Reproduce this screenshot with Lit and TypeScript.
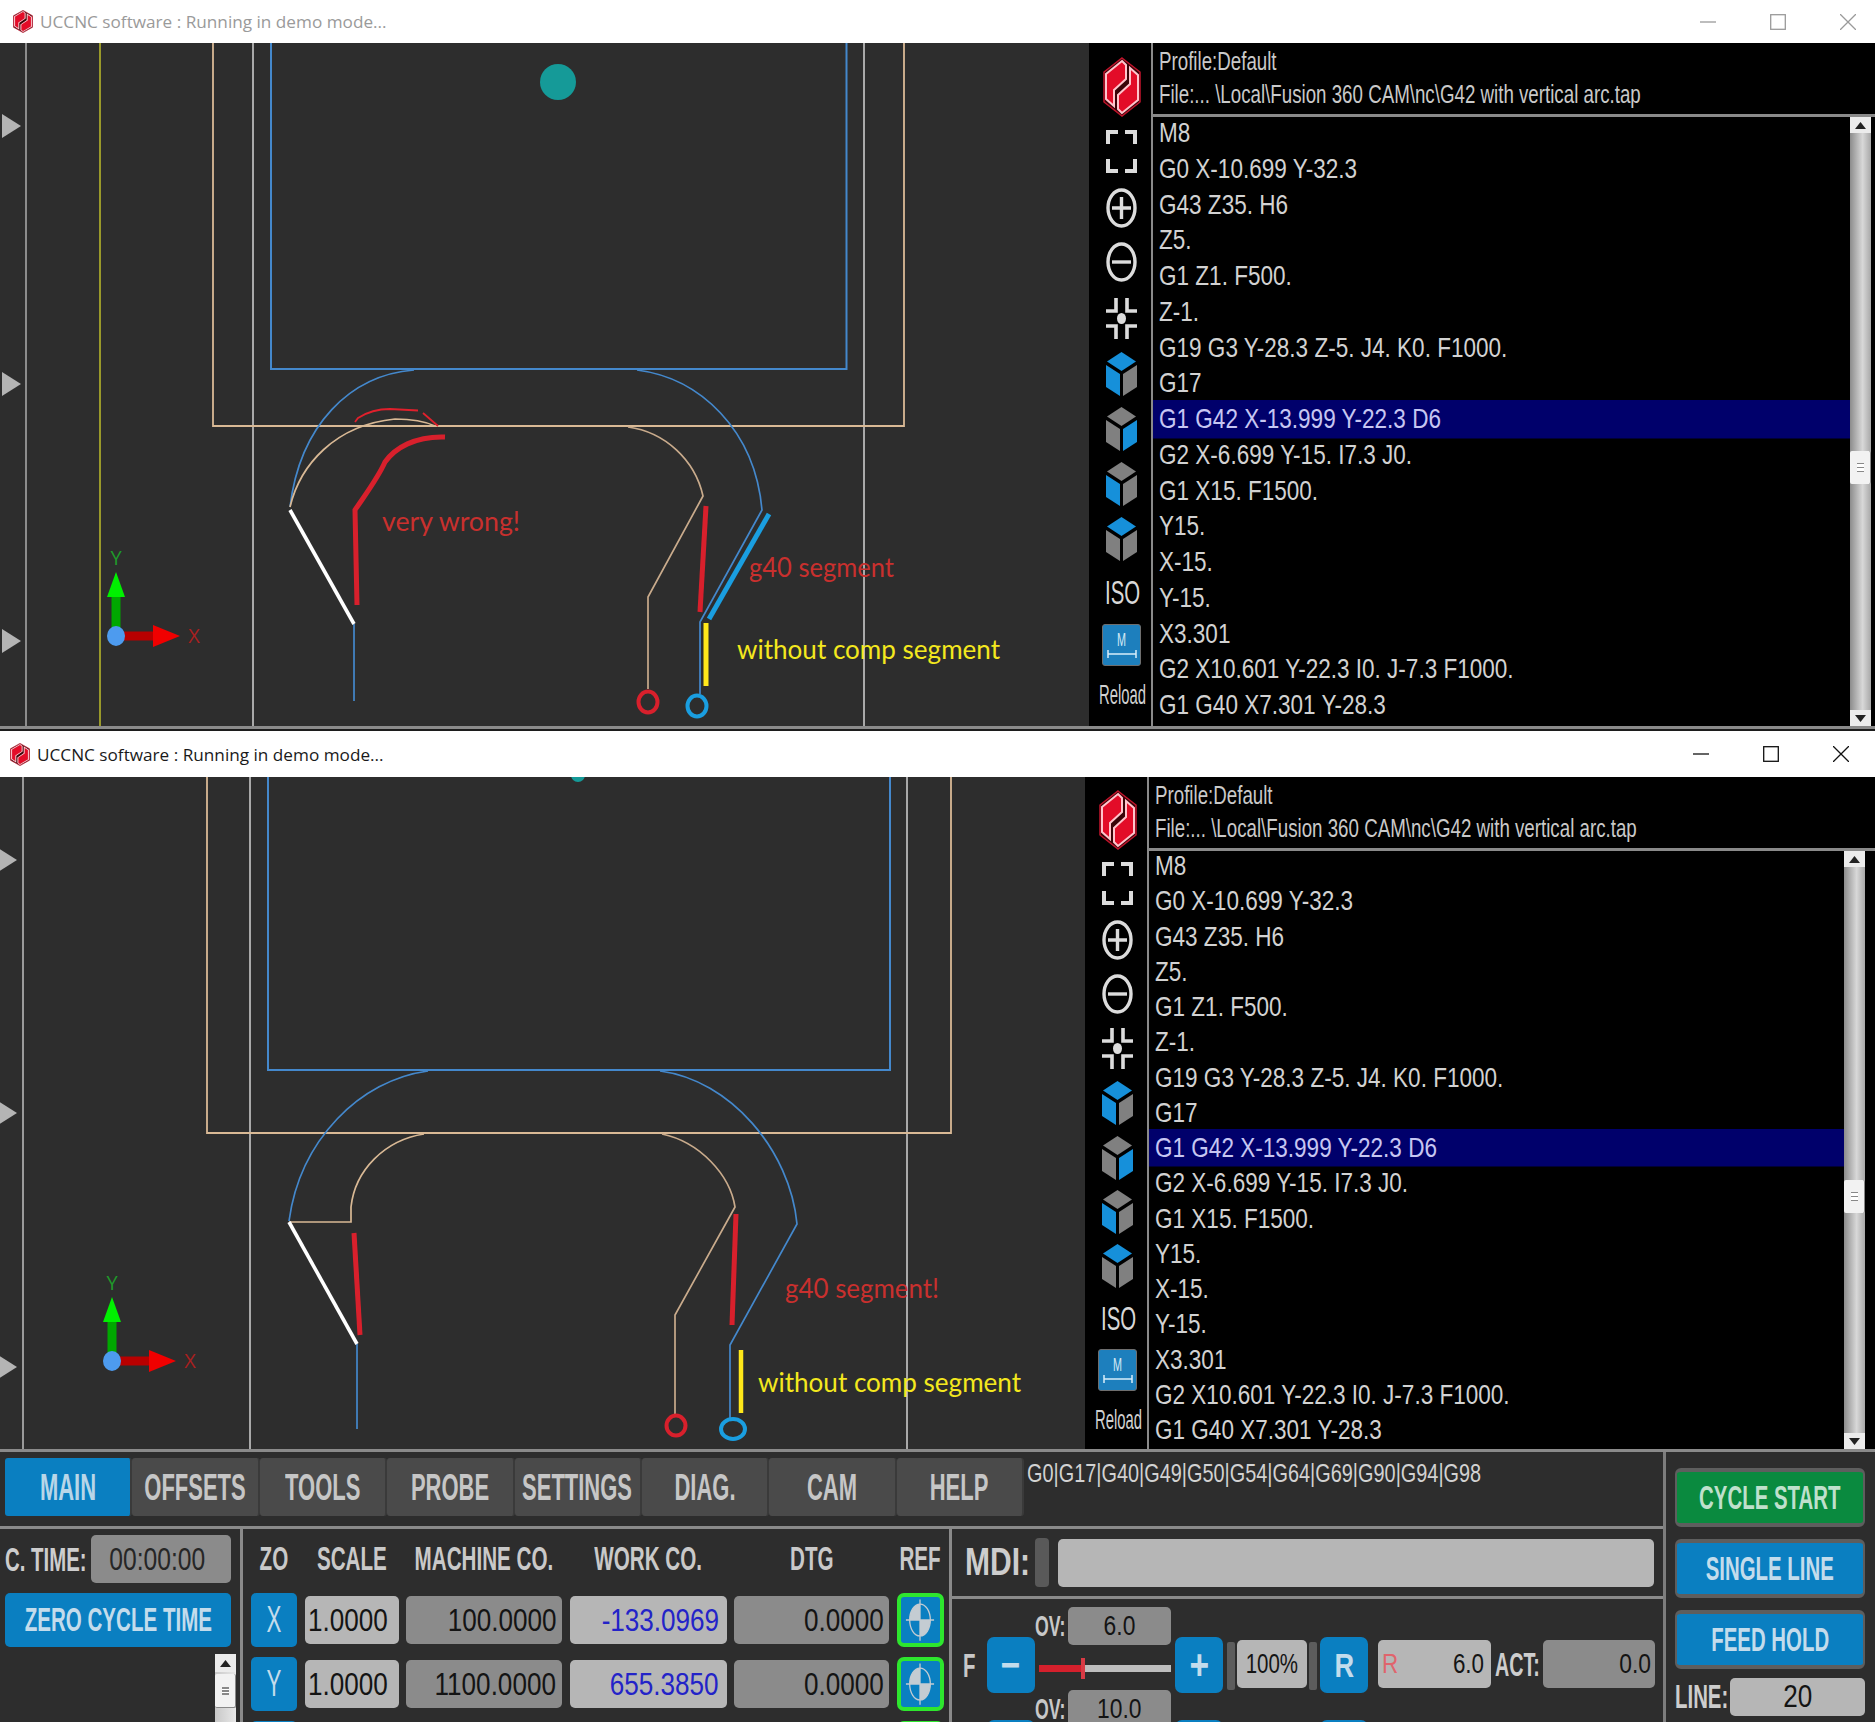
import { LitElement, html, css, svg } from "lit";
import { customElement, property } from "lit/decorators.js";

const CODE = [
  "M8", "G0 X-10.699 Y-32.3", "G43 Z35. H6", "Z5.", "G1 Z1. F500.", "Z-1.",
  "G19 G3 Y-28.3 Z-5. J4. K0. F1000.", "G17", "G1 G42 X-13.999 Y-22.3 D6",
  "G2 X-6.699 Y-15. I7.3 J0.", "G1 X15. F1500.", "Y15.", "X-15.", "Y-15.", "X3.301",
  "G2 X10.601 Y-22.3 I0. J-7.3 F1000.", "G1 G40 X7.301 Y-28.3",
];

const logo = (cls: string) => html`<svg class=${cls} viewBox="0 0 38 60" preserveAspectRatio="none">
  <polygon points="19,1 37,15 37,45 19,59 1,45 1,15" fill="#3a0408" stroke="#c2142c" stroke-width="1.5"/>
  <polygon points="19,4 23,8 23,22 11,33 11,49 3,42 3,17" fill="#e30c28" stroke="#ffc4cc" stroke-width="2"/>
  <polygon points="19,56 15,52 15,38 27,27 27,11 35,18 35,43" fill="#e30c28" stroke="#ffc4cc" stroke-width="2"/>
</svg>`;

const cube = (top: string, left: string, right: string) => html`<svg class="ic" viewBox="0 0 31 44">
  <polygon points="15.5,0 30,9.5 15.5,19 1,9.5" fill=${top}/>
  <polygon points="0,13 14,22 14,44 0,35" fill=${left}/>
  <polygon points="31,13 17,22 17,44 31,35" fill=${right}/>
</svg>`;

const BL = "#1690da";
const GR = "#808080";

const fullscreen = html`<svg class="ic" viewBox="0 0 31 43" fill="none" stroke="#dcdcdc" stroke-width="4">
  <path d="M2 14V2H12M19 2H29V14M2 29V41H12M19 41H29V29"/></svg>`;
const zoomIn = html`<svg class="ic" viewBox="0 0 31 40" fill="none" stroke="#dcdcdc" stroke-width="3.4">
  <ellipse cx="15.5" cy="20" rx="13.5" ry="18"/><path d="M15.5 9V31M6 20H25"/></svg>`;
const zoomOut = html`<svg class="ic" viewBox="0 0 31 40" fill="none" stroke="#dcdcdc" stroke-width="3.4">
  <ellipse cx="15.5" cy="20" rx="13.5" ry="18"/><path d="M6 20H25"/></svg>`;
const centre = html`<svg class="ic" viewBox="0 0 31 43" fill="none" stroke="#dcdcdc" stroke-width="3.6">
  <path d="M0 14H10V1M31 14H21V1M0 29H10V42M31 29H21V42"/>
  <ellipse cx="15.5" cy="21.5" rx="4.5" ry="5.5" fill="#dcdcdc" stroke="none"/></svg>`;

const refIcon = html`<svg class="ref-ic" viewBox="0 0 32 46" fill="none">
  <path d="M16 23V6A11 17 0 0 0 5 23Z" fill="#c4ccd2"/>
  <path d="M16 23V40A11 17 0 0 0 27 23Z" fill="#c4ccd2"/>
  <ellipse cx="16" cy="23" rx="11" ry="17" stroke="#c4ccd2" stroke-width="1.4"/>
  <path d="M16 1V45M1 23H31" stroke="#c4ccd2" stroke-width="1.4"/>
</svg>`;

const canvasBack = (tri: number[], triX: number) => svg`
  ${tri.map((y) => svg`<polygon points="${triX},${y - 12} ${triX + 19},${y} ${triX},${y + 12}" fill="#b4b4b4"/>`)}
`;

const axes = (x: number, y: number) => svg`
  <text x=${x} y=${y - 71} class="ax" text-anchor="middle" fill="#1f9a2a">Y</text>
  <rect x=${x - 4.5} y=${y - 39} width="9" height="34" fill="#00a800"/>
  <polygon points="${x},${y - 64} ${x + 9},${y - 39} ${x - 9},${y - 39}" fill="#00f000"/>
  <rect x=${x + 6} y=${y - 4.5} width="32" height="9" fill="#b80000"/>
  <polygon points="${x + 64},${y} ${x + 37},${y - 11} ${x + 37},${y + 11}" fill="#f00000"/>
  <ellipse cx=${x} cy=${y} rx="9" ry="10" fill="#4d9bef"/>
  <text x=${x + 78} y=${y + 7} class="ax" text-anchor="middle" fill="#a82020">X</text>
`;

const canvasOne = html`<svg class="cv" viewBox="0 43 1089 683" width="1089" height="683">
  <g fill="none">
    <path d="M26 43V726" stroke="#8c8c8c" stroke-width="2"/>
    <path d="M100 43V726" stroke="#b5b52a" stroke-width="1.6"/>
    <path d="M253 43V726M864 43V726" stroke="#c8c8c8" stroke-width="1.6"/>
    <path d="M213 43V426H904V43" stroke="#d9b995" stroke-width="1.8"/>
    <path d="M271 43V369H846.5V43" stroke="#4488cc" stroke-width="2"/>
    <path d="M414 370C350 375 300 425 290 507" stroke="#4488cc" stroke-width="1.7"/>
    <path d="M637 370C700 378 755 430 762 510L700 622V694" stroke="#4488cc" stroke-width="1.7"/>
    <path d="M354 624V701" stroke="#4488cc" stroke-width="1.7"/>
    <path d="M290 507C300 465 335 425 395 419Q420 419 435 426" stroke="#d9b995" stroke-width="1.7"/>
    <path d="M628 427C665 432 695 460 703 496L648 597V689" stroke="#c9ab8c" stroke-width="1.7"/>
    <path d="M290 510L354 624" stroke="#fff" stroke-width="3.6"/>
    <path d="M355 422L358 418Q372 409 390 409L418 410.5M423 413L438 426" stroke="#e0202c" stroke-width="1.8"/>
    <path d="M445 437C415 436 395 448 385 462C378 478 365 495 355 510L357 605" stroke="#d8202c" stroke-width="5"/>
    <path d="M706 506L700 612" stroke="#d8202c" stroke-width="5"/>
    <path d="M769 514L709 619" stroke="#1a9ee0" stroke-width="5"/>
    <path d="M706 623V686" stroke="#ffe81a" stroke-width="5"/>
    <ellipse cx="648" cy="702" rx="9.5" ry="10.5" stroke="#d8202c" stroke-width="4"/>
    <ellipse cx="697" cy="706" rx="9.5" ry="10.5" stroke="#1a9ee0" stroke-width="4"/>
  </g>
  <ellipse cx="558" cy="82" rx="18" ry="18" fill="#159a98"/>
  ${canvasBack([126, 384, 641], 2)}
  ${axes(116, 636)}
  <text class="note" x="382" y="531" fill="#c9302e" textLength="138" lengthAdjust="spacingAndGlyphs">very wrong!</text>
  <text class="note" x="749" y="577" fill="#c9302e" textLength="145" lengthAdjust="spacingAndGlyphs">g40 segment</text>
  <text class="note" x="737" y="659" fill="#f4e81e" textLength="263" lengthAdjust="spacingAndGlyphs">without comp segment</text>
</svg>`;

const canvasTwo = html`<svg class="cv" viewBox="0 777 1085 672" width="1085" height="672">
  <g fill="none">
    <path d="M23 777V1449" stroke="#9a9a9a" stroke-width="2"/>
    <path d="M250 777V1449M907 777V1449" stroke="#c8c8c8" stroke-width="1.6"/>
    <path d="M207 777V1133H951V777" stroke="#d9b995" stroke-width="1.8"/>
    <path d="M268 777V1070H890V777" stroke="#4488cc" stroke-width="2"/>
    <path d="M428 1071C360 1080 300 1140 289 1221" stroke="#4488cc" stroke-width="1.7"/>
    <path d="M660 1071C730 1080 790 1150 797 1224L730 1345V1419" stroke="#4488cc" stroke-width="1.7"/>
    <path d="M357 1344V1429" stroke="#4488cc" stroke-width="1.7"/>
    <path d="M289 1222H351V1207C355 1170 385 1140 424 1134" stroke="#d9b995" stroke-width="1.7"/>
    <path d="M662 1134C700 1142 730 1175 735 1207L675 1315V1414" stroke="#c9ab8c" stroke-width="1.7"/>
    <path d="M289 1222L357 1344" stroke="#fff" stroke-width="3.6"/>
    <path d="M354 1233L360 1335" stroke="#d8202c" stroke-width="5"/>
    <path d="M736 1214L732 1325" stroke="#d8202c" stroke-width="5"/>
    <path d="M741 1350V1413" stroke="#ffe81a" stroke-width="4.5"/>
    <ellipse cx="676" cy="1425.6" rx="9.5" ry="10" stroke="#d8202c" stroke-width="4"/>
    <ellipse cx="733" cy="1429" rx="12" ry="10" stroke="#1a9ee0" stroke-width="4"/>
  </g>
  <circle cx="578" cy="775" r="7" fill="#159a98"/>
  ${canvasBack([860, 1113, 1367], -2)}
  ${axes(112, 1361)}
  <text class="note" x="785" y="1298" fill="#c9302e" textLength="154" lengthAdjust="spacingAndGlyphs">g40 segment!</text>
  <text class="note" x="758" y="1392" fill="#f4e81e" textLength="263" lengthAdjust="spacingAndGlyphs">without comp segment</text>
</svg>`;

@customElement("code-panel")
class CodePanel extends LitElement {
  static styles = css`
    :host { display: flex; flex: 1; min-width: 0; height: 100%; font-family: "Liberation Sans", Arial, sans-serif; }
    .t { display: inline-block; white-space: nowrap; transform-origin: left center; }
    .tools { width: 62px; flex: none; box-sizing: border-box; padding-left: 3px; background: #000; display: grid; justify-items: center; align-items: end; align-content: start; }
    .tools.w1 { grid-template-rows: 74px 56px 55px 54px 58px 56px 55px 55px 55px 48px 57px 42px; }
    .tools.w2 { grid-template-rows: 72.5px 55.5px 55px 54px 55.5px 55.5px 55px 54px 54px 47px 56px 42px; }
    .logo { width: 38px; height: 60px; display: block; }
    .ic { width: 31px; display: block; }
    .iso { font-size: 34px; line-height: 34px; color: #d8d8d8; width: 36px; transform: scaleX(.6); transform-origin: left center; margin-left: 3px; }
    .reload { font-size: 28px; line-height: 26px; color: #d0d0d0; width: 47px; transform: scaleX(.53); transform-origin: left center; margin-left: 1px; }
    .mbtn { width: 39px; height: 42px; box-sizing: border-box; background: #1d7fbd; border: 1px solid #6e6e6e; border-radius: 3px; display: flex; flex-direction: column; align-items: center; justify-content: center; }
    .mbtn svg { width: 30px; height: 10px; display: block; }
    .mbtn b { font-weight: 400; font-size: 18px; line-height: 17px; color: #d4e8f4; transform: scaleX(.6); }
    .main { flex: 1; min-width: 0; display: flex; flex-direction: column; background: #000; border-left: 2px solid #8a8a8a; }
    .head { height: 71px; flex: none; border-bottom: 3px solid #8a8a8a; box-sizing: content-box; color: #c9c9c9; font-size: 26px; position: relative; z-index: 1; background: #000; padding-left: 6px; }
    .head div { height: 33px; line-height: 33px; }
    .head div:first-child { padding-top: 2px; }
    .head .t { transform: scaleX(.72); }
    .list { flex: 1; display: flex; min-height: 0; }
    .rows { flex: 1; min-width: 0; overflow: hidden; }
    .w1 .rows { margin-top: -2px; }
    .w2 .rows { margin-top: -3px; }
    .row { color: #d2d2d2; font-size: 28px; padding-left: 6px; white-space: nowrap; }
    .w1 .row { height: 35.75px; line-height: 36px; }
    .w2 .row { height: 35.25px; line-height: 35px; }
    .row.hl { background: #00006b; color: #c6c6f2; box-shadow: 0 -1px 0 #00006b, 0 1.5px 0 #00006b; }
    .row .t { transform: scaleX(.805); }
    .bar { width: 21px; flex: none; display: flex; flex-direction: column; background: linear-gradient(90deg, #8c8c8c, #d8d8d8 60%, #a8a8a8); }
    .w1 .bar { margin-right: 4px; }
    .w2 .bar { margin-right: 10px; }
    .arrow { height: 16px; flex: none; background: #ececec; display: flex; align-items: center; justify-content: center; }
    .arrow svg { width: 11px; height: 7px; display: block; }
    .track { flex: 1; }
    .thumb { height: 33px; background: #f2f2f2; border-radius: 2px; display: flex; align-items: center; justify-content: center; border-right: 1px solid #888; box-sizing: border-box; }
    .w1 .thumb { margin-top: 318px; }
    .w2 .thumb { margin-top: 313px; }
    .thumb i { display: block; width: 7px; height: 7px; border-top: 1px solid #888; border-bottom: 1px solid #888; background: linear-gradient(#fff 40%, #888 40%, #888 60%, #fff 60%); }
  `;
  @property() win = "w1";
  render() {
    return html`
      <div class="tools ${this.win}">
        ${logo("logo")}
        ${fullscreen}${zoomIn}${zoomOut}${centre}
        ${cube(BL, BL, GR)}${cube(GR, GR, BL)}${cube(GR, BL, GR)}${cube(BL, GR, GR)}
        <span class="t iso">ISO</span>
        <div class="mbtn"><b>M</b><svg viewBox="0 0 30 10" fill="none" stroke="#d8eefa" stroke-width="1.5"><path d="M1 1V9M29 1V9M1 5H29"/></svg></div>
        <span class="t reload">Reload</span>
      </div>
      <div class="main ${this.win}">
        <div class="head">
          <div><span class="t">Profile:Default</span></div>
          <div><span class="t">File:... \\Local\\Fusion 360 CAM\\nc\\G42 with vertical arc.tap</span></div>
        </div>
        <div class="list">
          <div class="rows">
            ${CODE.map((c, i) => html`<div class="row ${i === 8 ? "hl" : ""}"><span class="t">${c}</span></div>`)}
          </div>
          <div class="bar">
            <div class="arrow"><svg viewBox="0 0 11 7"><polygon points="5.5,0 11,7 0,7" fill="#222"/></svg></div>
            <div class="track"><div class="thumb"><i></i></div></div>
            <div class="arrow"><svg viewBox="0 0 11 7"><polygon points="0,0 11,0 5.5,7" fill="#222"/></svg></div>
          </div>
        </div>
      </div>
    `;
  }
}

@customElement("title-bar")
class TitleBar extends LitElement {
  static styles = css`
    :host { display: flex; align-items: center; background: #fff; font-family: "Open Sans", sans-serif; font-size: 17px; }
    :host(.w1) { height: 43px; color: #9a9a9a; padding-left: 13px; }
    :host(.w2) { height: 46px; color: #1a1a1a; padding-left: 10px; }
    .lg { width: 20px; height: 23px; display: block; flex: none; }
    .name { margin-left: 7px; white-space: nowrap; transform: scaleX(1.01); transform-origin: left center; }
    :host(.w2) .name { margin-left: 7px; }
    .ctrls { margin-left: auto; display: flex; }
    .ctrls svg { width: 16px; height: 16px; display: block; }
    :host(.w1) .ctrls { gap: 54px; padding-right: 19px; stroke: #9a9a9a; }
    :host(.w2) .ctrls { gap: 54px; padding-right: 26px; stroke: #111; }
  `;
  render() {
    return html`
      ${logo("lg")}
      <span class="name">UCCNC software : Running in demo mode...</span>
      <div class="ctrls">
        <svg viewBox="0 0 16 16" fill="none" stroke-width="1.3"><path d="M0 8H16"/></svg>
        <svg viewBox="0 0 16 16" fill="none" stroke-width="1.3"><rect x=".7" y=".7" width="14.6" height="14.6"/></svg>
        <svg viewBox="0 0 16 16" fill="none" stroke-width="1.3"><path d="M0 0L16 16M16 0L0 16"/></svg>
      </div>
    `;
  }
}

const TABS = ["MAIN", "OFFSETS", "TOOLS", "PROBE", "SETTINGS", "DIAG.", "CAM", "HELP"];

@customElement("control-panel")
class ControlPanel extends LitElement {
  static styles = css`
    :host { display: flex; height: 270px; background: #2d2d2d; font-family: "Liberation Sans", Arial, sans-serif; overflow: hidden; color: #cfcfcf; }
    .t { display: inline-block; white-space: nowrap; }
    .left { width: 1663px; flex: none; display: flex; flex-direction: column; }
    .right { flex: 1; border-left: 3px solid #7d7d7d; padding: 16px 0 0 9px; display: flex; flex-direction: column; gap: 12px; }
    .top { flex: none; box-sizing: border-box; display: flex; padding: 6px 0 0 5px; border-bottom: 3px solid #8a8a8a; height: 77px; }
    .tabs { display: flex; height: 58px; }
    .tab { width: 127.4px; height: 58px; background: #4a4a4a; border-right: 2px solid #3a3a3a; box-sizing: border-box; display: flex; align-items: center; justify-content: center; font-size: 36px; font-weight: 700; color: #c6c6c6; border-radius: 3px; padding-top: 2px; }
    .tab.on { background: #0a7fc1; color: #b8d6e8; }
    .tab .t { transform: scaleX(.61); }
    .modal { font-size: 26px; margin: 1px 0 0 3px; color: #d2d2d2; line-height: 28px; }
    .modal .t { transform: scaleX(.765); transform-origin: left center; }
    .lower { flex: 1; display: flex; min-height: 0; }
    .cl { border-right: 3px solid #8a8a8a; padding: 6px 0 0 5px; box-sizing: content-box; display: flex; flex-direction: column; width: 235px; flex: none; }
    .ctime { display: flex; height: 48px; align-items: center; }
    .lab { font-size: 34px; font-weight: 700; color: #cdcdcd; }
    .ctime .lab { width: 86px; }
    .ctime .lab .t { transform: scaleX(.6); transform-origin: left center; }
    .box { background: #8b8b8b; border-radius: 5px; display: flex; align-items: center; font-size: 32px; color: #141414; height: 48px; box-sizing: border-box; overflow: hidden; }
    .box.lt { background: #b6b6b6; }
    .box.c { justify-content: center; }
    .box.l { justify-content: flex-start; padding-left: 3px; }
    .box.l .t { transform-origin: left center; }
    .box.r { justify-content: flex-end; padding-right: 6px; }
    .box .t { transform: scaleX(.815); }
    .box.r .t { transform-origin: right center; }
    .work.box.r { padding-right: 8px; color: #2323c8; }
    .timebox { width: 140px; color: #262626; padding-right: 7px; }
    .timebox.box .t { transform: scaleX(.77); }
    .btn { background: #0a7fc1; border-radius: 5px; display: flex; align-items: center; justify-content: center; color: #c3dcec; overflow: hidden; }
    .zero { width: 226px; height: 54px; margin-top: 10px; font-size: 33px; font-weight: 700; }
    .zero .t { transform: scaleX(.623); }
    .sb { width: 21px; margin: 7px 0 0 210px; flex: 1; background: linear-gradient(90deg, #c8c8c8, #e8e8e8); display: flex; flex-direction: column; }
    .sb .a { height: 18px; background: #ececec; display: flex; align-items: center; justify-content: center; }
    .sb .a svg { width: 11px; height: 7px; display: block; }
    .sb .th { height: 33px; margin-top: 2px; background: #f2f2f2; border-right: 1px solid #888; border-bottom: 1px solid #888; border-radius: 2px; display: flex; align-items: center; justify-content: center; }
    .sb .th i { display: block; width: 7px; height: 8px; background: linear-gradient(#888 20%, #fff 20%, #fff 40%, #888 40%, #888 60%, #fff 60%, #fff 80%, #888 80%); }
    .cm { width: 709px; flex: none; box-sizing: border-box; border-right: 3px solid #8a8a8a; padding-left: 8px; display: grid; grid-template-columns: 46px 94px 156px 157px 155px 47px; column-gap: 7.6px; grid-template-rows: 54px 54px 54px 54px; row-gap: 10px; align-items: center; justify-items: stretch; }
    .hd { height: 54px; padding-top: 6px; box-sizing: border-box; display: flex; align-items: center; justify-content: center; font-size: 33px; font-weight: 700; color: #c9c9c9; }
    .hd .t { transform: scaleX(.625); }
    .axis { height: 54px; font-size: 36px; }
    .axis .t { transform: scaleX(.62); }
    .ref { height: 54px; box-sizing: border-box; border: 4px solid #2ee62e; background: #0a7fc1; border-radius: 7px; display: flex; align-items: center; justify-content: center; }
    .ref-ic { height: 44px; width: 30px; display: block; }
    .cr { flex: 1; min-width: 0; display: flex; flex-direction: column; }
    .mdi { height: 67px; flex: none; display: flex; align-items: center; padding-left: 13px; border-bottom: 3px solid #8a8a8a; box-sizing: content-box; }
    .mdi .lab { width: 64px; font-size: 38px; }
    .mdi .lab .t { transform: scaleX(.79); transform-origin: left center; }
    .gbar { width: 14px; height: 49px; background: #595959; border-radius: 4px; margin-left: 6px; flex: none; }
    .mdiin { width: 596px; background: #b2b2b2; margin-left: 9px; height: 48px; }
    .frow { height: 83px; flex: none; display: flex; align-items: flex-start; padding-left: 11px; }
    .fl { width: 23.5px; height: 56px; margin-top: 38px; display: flex; align-items: center; font-size: 34px; font-weight: 700; color: #c8c8c8; }
    .fl .t { transform: scaleX(.6); transform-origin: left center; }
    .fb { width: 48px; height: 56px; margin-top: 38px; flex: none; font-size: 42px; font-weight: 700; border-radius: 7px; }
    .fb.plus { margin-left: 4.5px; }
    .fb .t { transform: scaleX(.8); }
    .ovc { width: 136px; flex: none; margin-top: 8px; display: flex; flex-direction: column; }
    .ovr { display: flex; align-items: center; height: 38px; }
    .ovl { width: 33px; font-size: 30px; font-weight: 700; color: #c8c8c8; }
    .ovl .t { transform: scaleX(.59); transform-origin: left center; }
    .ovb { width: 103px; height: 38px; font-size: 28px; }
    .slide { height: 21px; margin: 13px 0 0 4px; position: relative; display: flex; align-items: center; }
    .slide .fill { width: 44px; height: 7px; background: #d4202c; flex: none; }
    .slide .rest { flex: 1; height: 7px; background: #bdbdbd; }
    .slide .thumb { position: absolute; left: 42px; top: 0; width: 4px; height: 21px; background: #d83a44; }
    .sm { width: 8px; height: 48px; margin-top: 43px; background: #5c5c5c; flex: none; border-radius: 2px; }
    .sm.g { margin-left: 4px; }
    .sm.h { margin-left: 2px; }
    .mb { margin-top: 41px; font-size: 28px; flex: none; }
    .pct { width: 70px; margin-left: 2px; }
    .pct.box .t { transform: scaleX(.73); }
    .fb.rb { margin-left: 3px; font-size: 34px; }
    .rv { width: 113px; margin-left: 9.5px; justify-content: space-between; padding: 0 3px 0 4px; }
    .rv .rr { color: #e0646c; }
    .rv .rr, .rv .t { transform: scaleX(.8); }
    .rr { transform-origin: left center; display: inline-block; }
    .act { width: 47px; margin: 41px 0 0 4px; height: 48px; display: flex; align-items: center; font-size: 34px; font-weight: 700; color: #cdcdcd; flex: none; }
    .act .t { transform: scaleX(.58); transform-origin: left center; }
    .actb { width: 112px; margin-left: 1px; }
    .actb.box.r { padding-right: 4px; }
    .big { width: 190px; height: 59px; box-sizing: border-box; border: 4px solid #5e5e5e; border-left-width: 2px; border-right-width: 2px; border-radius: 6px; font-size: 34px; font-weight: 700; }
    .big .t { transform: scaleX(.6); }
    .big.go { background: #0a8a3f; color: #bfe0cc; }
    .linerow { display: flex; align-items: center; margin-top: -4px; }
    .linerow .lab { width: 55px; }
    .linerow .lab .t { transform: scaleX(.6); transform-origin: left center; }
    .linebox { width: 135px; height: 38px; background: #b6b6b6; }
  `;
  render() {
    const axisRow = (a: string, s: string, m: string, w: string, d: string) => html`
      <div class="btn axis"><span class="t">${a}</span></div>
      <div class="box lt l"><span class="t">${s}</span></div>
      <div class="box r"><span class="t">${m}</span></div>
      <div class="box lt r work"><span class="t">${w}</span></div>
      <div class="box r"><span class="t">${d}</span></div>
      <div class="ref">${refIcon}</div>`;
    const head = (s: string) => html`<div class="hd"><span class="t">${s}</span></div>`;
    return html`
      <div class="left">
        <div class="top">
          <div class="tabs">${TABS.map((t, i) => html`<div class="tab ${i === 0 ? "on" : ""}"><span class="t">${t}</span></div>`)}</div>
          <div class="modal"><span class="t">G0|G17|G40|G49|G50|G54|G64|G69|G90|G94|G98</span></div>
        </div>
        <div class="lower">
          <div class="cl">
            <div class="ctime"><div class="lab"><span class="t">C. TIME:</span></div><div class="box c timebox"><span class="t">00:00:00</span></div></div>
            <div class="btn zero"><span class="t">ZERO CYCLE TIME</span></div>
            <div class="sb">
              <div class="a"><svg viewBox="0 0 11 7"><polygon points="5.5,0 11,7 0,7" fill="#222"/></svg></div>
              <div class="th"><i></i></div>
            </div>
          </div>
          <div class="cm">
            ${head("ZO")}${head("SCALE")}${head("MACHINE CO.")}${head("WORK CO.")}${head("DTG")}${head("REF")}
            ${axisRow("X", "1.0000", "100.0000", "-133.0969", "0.0000")}
            ${axisRow("Y", "1.0000", "1100.0000", "655.3850", "0.0000")}
            <div class="btn axis"></div><div></div><div></div><div></div><div></div><div class="ref"></div>
          </div>
          <div class="cr">
            <div class="mdi"><div class="lab"><span class="t">MDI:</span></div><div class="gbar"></div><div class="box lt mdiin"></div></div>
            <div class="frow">
              <div class="fl"><span class="t">F</span></div>
              <div class="btn fb"><span class="t">−</span></div>
              <div class="ovc">
                <div class="ovr"><div class="ovl"><span class="t">OV:</span></div><div class="box c ovb"><span class="t">6.0</span></div></div>
                <div class="slide"><div class="fill"></div><div class="rest"></div><div class="thumb"></div></div>
              </div>
              <div class="btn fb plus"><span class="t">+</span></div>
              <div class="sm g"></div>
              <div class="box lt c mb pct"><span class="t">100%</span></div>
              <div class="sm h"></div>
              <div class="btn fb rb"><span class="t">R</span></div>
              <div class="box lt mb rv"><span class="rr">R</span><span class="t">6.0</span></div>
              <div class="act"><span class="t">ACT:</span></div>
              <div class="box r mb actb"><span class="t">0.0</span></div>
            </div>
            <div class="frow">
              <div class="fl"></div>
              <div class="btn fb"></div>
              <div class="ovc">
                <div class="ovr"><div class="ovl"><span class="t">OV:</span></div><div class="box c ovb"><span class="t">10.0</span></div></div>
              </div>
              <div class="btn fb plus"></div>
              <div class="sm g"></div>
              <div class="box lt c mb pct"></div>
              <div class="sm h"></div>
              <div class="btn fb rb"></div>
            </div>
          </div>
        </div>
      </div>
      <div class="right">
        <div class="btn big go"><span class="t">CYCLE START</span></div>
        <div class="btn big"><span class="t">SINGLE LINE</span></div>
        <div class="btn big"><span class="t">FEED HOLD</span></div>
        <div class="linerow"><div class="lab"><span class="t">LINE:</span></div><div class="box c linebox"><span class="t">20</span></div></div>
      </div>
    `;
  }
}

@customElement("app-root")
class AppRoot extends LitElement {
  static styles = css`
    :host { display: block; width: 1875px; height: 1722px; overflow: hidden; background: #1c1c1c; }
    .view { display: flex; background: #2d2d2d; }
    .view.w1 { height: 683px; }
    .view.w2 { height: 672px; }
    .cv { display: block; flex: none; }
    .cv .note { font-family: Lato, "Open Sans", sans-serif; font-size: 27px; }
    .cv .ax { font-family: "Open Sans", sans-serif; font-size: 20px; }
    .rule { height: 3px; background: #8a8a8a; }
    .sep { height: 2px; background: #1c1c1c; }
  `;
  render() {
    return html`
      <title-bar class="w1"></title-bar>
      <div class="view w1">${canvasOne}<code-panel win="w1"></code-panel></div>
      <div class="rule"></div>
      <div class="sep"></div>
      <title-bar class="w2"></title-bar>
      <div class="view w2">${canvasTwo}<code-panel win="w2"></code-panel></div>
      <div class="rule"></div>
      <control-panel></control-panel>
    `;
  }
}
